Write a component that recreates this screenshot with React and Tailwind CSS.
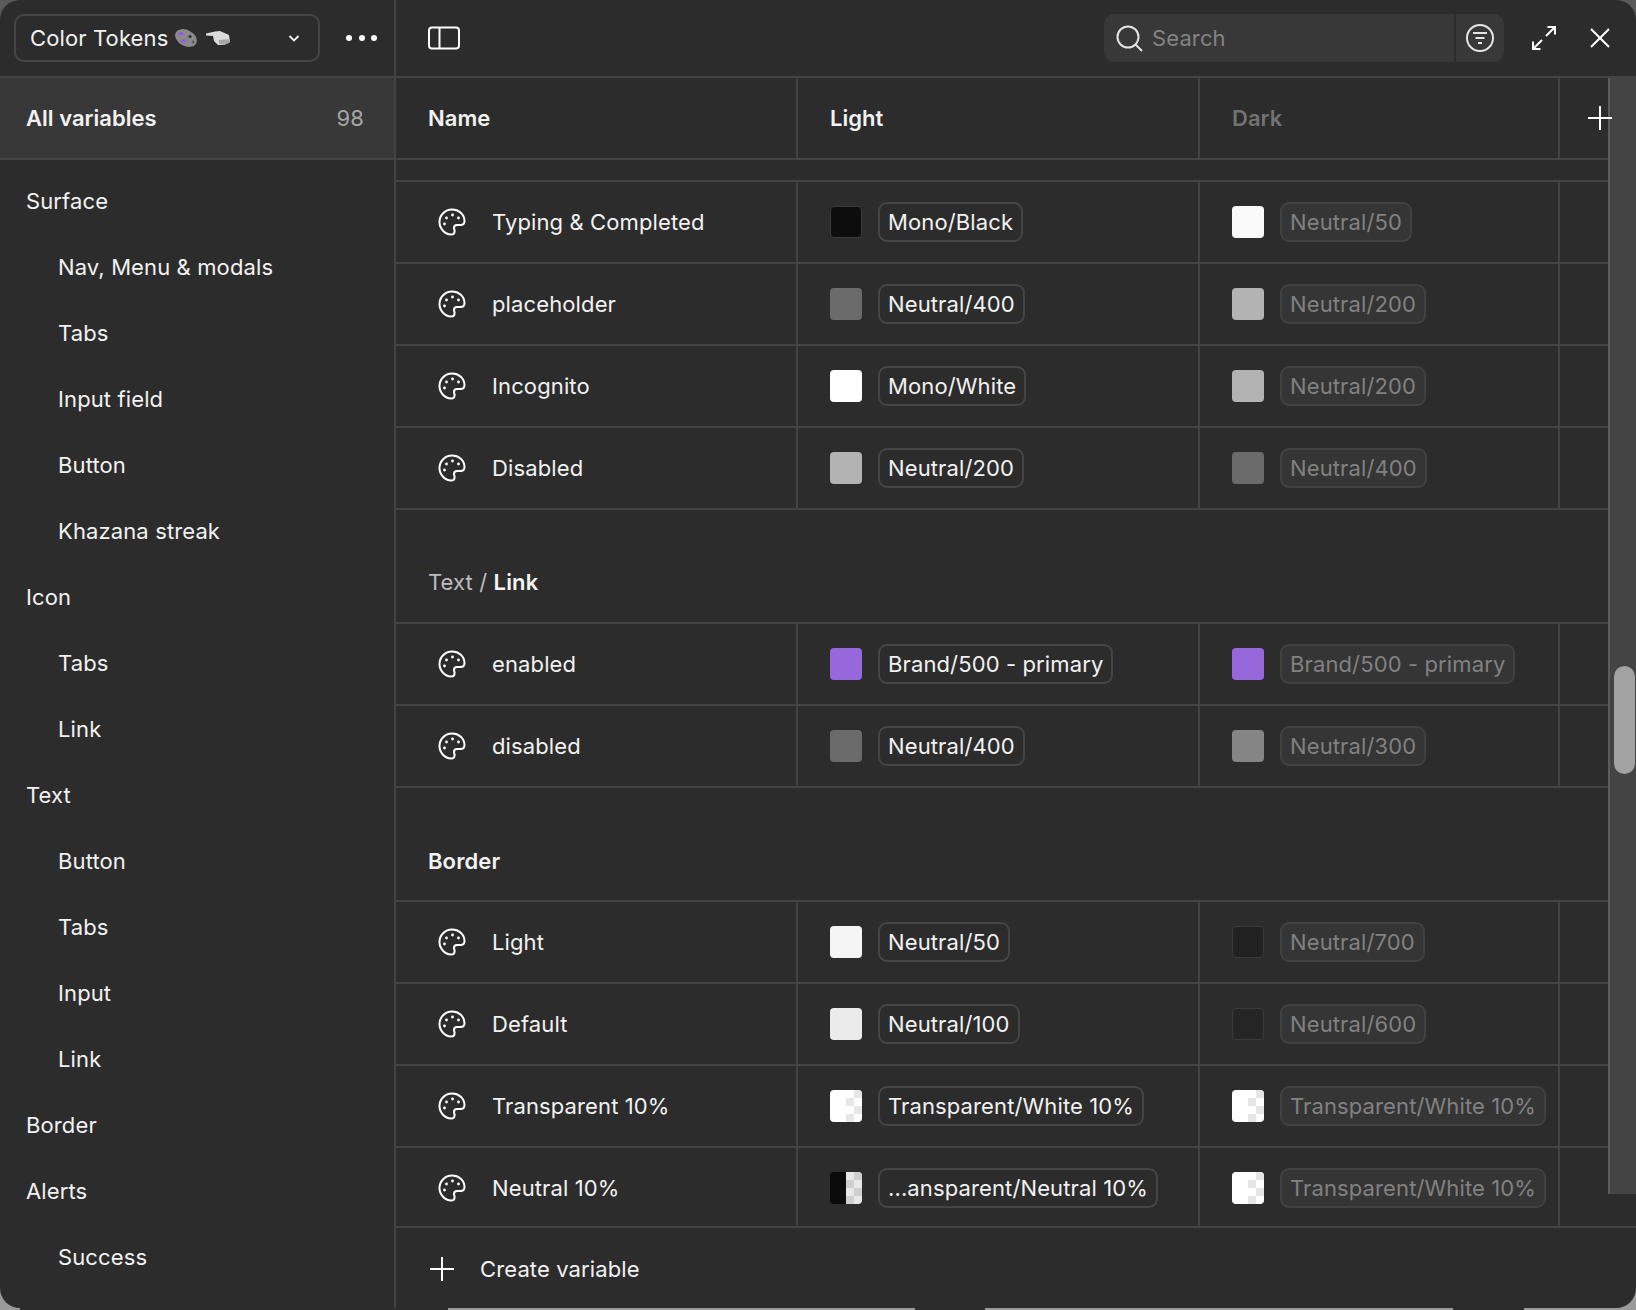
const Palette = () => (
  <svg width="30" height="30" viewBox="0 0 30 30" fill="none" stroke="#fff" strokeWidth="2" strokeLinejoin="round" className="shrink-0">
    <path d="M15 2.500C8 2.500 2.500 8.200 2.500 15S8 27.500 14 27.500c2.600 0 3.600-1.800 3.600-3.600 0-1.200-.6-1.900-.6-3 0-1.700 1.300-2.800 3-2.800h3.600c2.400 0 3.900-1.600 3.900-4C27.500 7.200 21.800 2.500 15 2.500Z" />
    <circle cx="15.500" cy="8" r="1.400" fill="#fff" stroke="none" />
    <circle cx="21.500" cy="11" r="1.400" fill="#fff" stroke="none" />
    <circle cx="9.500" cy="11" r="1.400" fill="#fff" stroke="none" />
    <circle cx="7.500" cy="17" r="1.400" fill="#fff" stroke="none" />
  </svg>
);

const Plus = ({ s = 26 }) => (
  <svg width={s} height={s} viewBox="0 0 26 26" stroke="#fff" strokeWidth="2" className="shrink-0">
    <path d="M13 1v24M1 13h24" />
  </svg>
);

const Checker = ({ black }) => (
  <span className="flex w-[32px] h-[32px] shrink-0 rounded-[4px] overflow-hidden">
    <span className={"w-1/2 h-full " + (black ? "bg-[#0b0b0b]" : "bg-white")} />
    <span className={"w-1/2 h-full grid grid-cols-2 grid-rows-4 " + (black ? "bg-[#e8e8e8]" : "bg-white")}>
      {[0, 1, 2, 3, 4, 5, 6, 7].map((i) => (
        <span
          key={i}
          className={
            i === 1 || i === 2 || i === 5 || i === 6
              ? black
                ? "bg-[#cfcfcf]"
                : "bg-[#e6e6e6]"
              : ""
          }
        />
      ))}
    </span>
  </span>
);

const Swatch = ({ c }) => {
  if (c === "tw") return <Checker />;
  if (c === "tn") return <Checker black />;
  const dark = c === "#0d0d0d" || c === "#222222" || c === "#262626";
  return <span className={"w-[32px] h-[32px] shrink-0 rounded-[4px] " + (dark ? "border border-[#3a3a3a]" : "")} style={{ backgroundColor: c }} />;
};

const LightPill = ({ t }) => (
  <span className="h-[40px] flex items-center px-[8px] border-2 border-[#454545] rounded-[9px] text-[#f2f2f2] whitespace-nowrap">{t}</span>
);
const DarkPill = ({ t }) => (
  <span className="h-[40px] flex items-center px-[8px] border-2 border-[#414141] bg-[#353535] rounded-[9px] text-[#818181] whitespace-nowrap">{t}</span>
);

const Row = ({ name, lc, lt, dc, dt, last }) => {
  const shift = last ? "pt-[2px] " : "";
  return (
    <div className={"flex border-b-2 border-[#434343] " + (last ? "h-[80px]" : "h-[82px]")}>
      <div className={shift + "w-[402px] shrink-0 flex items-center pl-[41px] gap-[25px] border-r-2 border-[#434343] text-[#f2f2f2]"}>
        <Palette />
        <span>{name}</span>
      </div>
      <div className={shift + "w-[402px] shrink-0 flex items-center pl-[32px] gap-[16px] border-r-2 border-[#434343]"}>
        <Swatch c={lc} />
        <LightPill t={lt} />
      </div>
      <div className={shift + "w-[360px] shrink-0 flex items-center pl-[32px] gap-[16px] border-r-2 border-[#434343]"}>
        <Swatch c={dc} />
        <DarkPill t={dt} />
      </div>
    </div>
  );
};

const sideItems = [
  ["Surface", 0], ["Nav, Menu & modals", 1], ["Tabs", 1], ["Input field", 1], ["Button", 1], ["Khazana streak", 1],
  ["Icon", 0], ["Tabs", 1], ["Link", 1], ["Text", 0], ["Button", 1], ["Tabs", 1], ["Input", 1], ["Link", 1],
  ["Border", 0], ["Alerts", 0], ["Success", 1],
];

const rows1 = [
  ["Typing & Completed", "#0d0d0d", "Mono/Black", "#fafafa", "Neutral/50"],
  ["placeholder", "#6b6b6b", "Neutral/400", "#b3b3b3", "Neutral/200"],
  ["Incognito", "#ffffff", "Mono/White", "#b3b3b3", "Neutral/200"],
  ["Disabled", "#b3b3b3", "Neutral/200", "#6b6b6b", "Neutral/400"],
];
const rows2 = [
  ["enabled", "#9768dc", "Brand/500 - primary", "#9768dc", "Brand/500 - primary"],
  ["disabled", "#6b6b6b", "Neutral/400", "#858585", "Neutral/300"],
];
const rows3 = [
  ["Light", "#f5f5f5", "Neutral/50", "#222222", "Neutral/700"],
  ["Default", "#ebebeb", "Neutral/100", "#262626", "Neutral/600"],
  ["Transparent 10%", "tw", "Transparent/White 10%", "tw", "Transparent/White 10%"],
  ["Neutral 10%", "tn", "...ansparent/Neutral 10%", "tw", "Transparent/White 10%"],
];

const renderRow = (r) => (
  <Row key={r[0]} name={r[0]} lc={r[1]} lt={r[2]} dc={r[3]} dt={r[4]} last={r[0] === "Neutral 10%"} />
);

export default function App() {
  return (
    <div className="relative w-[1636px] h-[1310px] bg-linear-to-b from-[#5a5a5a] to-[#9a9a9a] overflow-hidden tracking-[0.12px]" style={{ fontFamily: "Inter, sans-serif" }}>
      <div className="relative flex w-full h-[1308px] bg-[#2c2c2c] rounded-[20px] overflow-hidden text-[22px] text-[#f2f2f2]">
        <aside className="w-[396px] shrink-0 flex flex-col border-r-2 border-[#434343]">
          <div className="h-[78px] shrink-0 flex items-center pl-[14px] pr-[17px] justify-between border-b-2 border-[#434343]">
            <div className="w-[306px] h-[48px] flex items-center pl-[14px] pr-[16px] border-2 border-[#454545] rounded-[10px]">
              <span>Color Tokens</span>
              <svg width="56" height="22" viewBox="0 0 56 22" className="ml-[6px]" aria-hidden="true">
                <ellipse cx="12" cy="11" rx="11.500" ry="8" fill="#8a8a8a" transform="rotate(28 12 11)" />
                <ellipse cx="7" cy="6.500" rx="2.600" ry="1.800" fill="#8e5fe0" />
                <ellipse cx="9.500" cy="14" rx="2.600" ry="1.800" fill="#8e5fe0" />
                <circle cx="16" cy="9.500" r="1.600" fill="#333333" />
                <circle cx="19" cy="15" r="1.400" fill="#5a5a5a" />
                <path d="M32 6.500 L41 4.500 L46 4 L55 8 L56 15 L50 18 L44 18 L40 14 L39 9 L32 8.500 Z" fill="#dcdcdc" />
                <path d="M45 13 L56 12 L55 16 L50 18 L45 17 Z" fill="#a8a8a8" />
              </svg>
              <svg width="16" height="16" viewBox="0 0 16 16" fill="none" stroke="#f2f2f2" strokeWidth="1.800" className="ml-auto">
                <path d="M3.500 6 8 10.500 12.500 6" />
              </svg>
            </div>
            <div className="flex gap-[6.5px]">
              <span className="w-[6px] h-[6px] rounded-full bg-white" />
              <span className="w-[6px] h-[6px] rounded-full bg-white" />
              <span className="w-[6px] h-[6px] rounded-full bg-white" />
            </div>
          </div>
          <div className="h-[82px] shrink-0 flex items-center justify-between pl-[26px] pr-[30px] bg-[#383838] border-b-2 border-[#434343]">
            <span className="font-semibold tracking-[0.03px]">All variables</span>
            <span className="text-[#a5a5a5]">98</span>
          </div>
          <nav className="pt-[8px]">
            {sideItems.map(([t, ind], i) => (
              <div key={i} className={"h-[66px] flex items-center " + (ind ? "pl-[58px]" : "pl-[26px]")}>{t}</div>
            ))}
          </nav>
        </aside>
        <main className="flex-1 min-w-0 flex flex-col">
          <div className="h-[78px] shrink-0 flex items-center pl-[32px] border-b-2 border-[#434343]">
            <svg width="32" height="24" viewBox="0 0 32 24" fill="none" stroke="#fff" strokeWidth="2" className="shrink-0">
              <rect x="1" y="1.500" width="30" height="21" rx="3" />
              <path d="M11.500 1.500v21" />
            </svg>
            <div className="ml-auto flex items-center h-[48px] w-[400px] rounded-[10px] bg-[#383838]">
              <div className="flex-1 flex items-center pl-[11px] gap-[9px] h-full border-r-2 border-[#2c2c2c]">
                <svg width="28" height="28" viewBox="0 0 28 28" fill="none" stroke="#e4e4e4" strokeWidth="2">
                  <circle cx="13" cy="13" r="10.500" />
                  <path d="M20.500 20.500 27 27" />
                </svg>
                <span className="text-[#838383]">Search</span>
              </div>
              <div className="w-[48px] flex items-center justify-center">
                <svg width="30" height="30" viewBox="0 0 30 30" fill="none" stroke="#e4e4e4" strokeWidth="2">
                  <circle cx="15" cy="15" r="13" />
                  <path d="M8 10h14M10.500 15h9M13 20h4" />
                </svg>
              </div>
            </div>
            <svg width="24" height="24" viewBox="0 0 24 24" fill="none" stroke="#fff" strokeWidth="2" className="ml-[28px] shrink-0">
              <path d="M14 10 23 1M15.500 1H23v7.500M10 14 1 23M1 15.500V23h7.500" />
            </svg>
            <svg width="20" height="20" viewBox="0 0 20 20" fill="none" stroke="#fff" strokeWidth="2" className="ml-[34px] mr-[26px] shrink-0">
              <path d="M1 1l18 18M19 1 1 19" />
            </svg>
          </div>
          <div className="h-[82px] shrink-0 flex border-b-2 border-[#434343] font-semibold tracking-[0.03px]">
            <div className="w-[402px] flex items-center pl-[32px] border-r-2 border-[#434343]">Name</div>
            <div className="w-[402px] flex items-center pl-[32px] border-r-2 border-[#434343]">Light</div>
            <div className="w-[360px] flex items-center pl-[32px] border-r-2 border-[#434343] text-[#737373]">Dark</div>
            <div className="flex-1 flex items-center pl-[27px] relative z-10"><Plus /></div>
          </div>
          <div className="h-[22px] shrink-0 border-b-2 border-[#434343]" />
          <div className="flex-1 min-h-0">
            {rows1.map(renderRow)}
            <div className="h-[114px] flex items-end pb-[23px] pl-[32px] border-b-2 border-[#434343]">
              <span className="text-[#bdbdbd]">Text / <span className="font-semibold text-[#f2f2f2]">Link</span></span>
            </div>
            {rows2.map(renderRow)}
            <div className="h-[114px] flex items-end pb-[22px] pl-[32px] border-b-2 border-[#434343]">
              <span className="font-semibold">Border</span>
            </div>
            {rows3.map(renderRow)}
            <div className="h-[82px] flex items-center pl-[33px] gap-[25px]">
              <Plus />
              <span>Create variable</span>
            </div>
          </div>
        </main>
        <div className="absolute left-[1608px] top-[78px] w-[28px] h-[1116px] bg-[#444444] border-l-2 border-[#5c5c5c]">
          <div className="absolute left-[4px] top-[588px] w-[21px] h-[108px] rounded-full bg-[#a2a2a2]" />
        </div>
      </div>
      <div className="absolute bottom-0 left-[20px] w-[428px] h-[2px] bg-[#2c2c2c]" />
      <div className="absolute bottom-0 left-[915px] w-[70px] h-[2px] bg-[#2c2c2c]" />
      <div className="absolute bottom-0 left-[1453px] w-[71px] h-[2px] bg-[#2c2c2c]" />
    </div>
  );
}
